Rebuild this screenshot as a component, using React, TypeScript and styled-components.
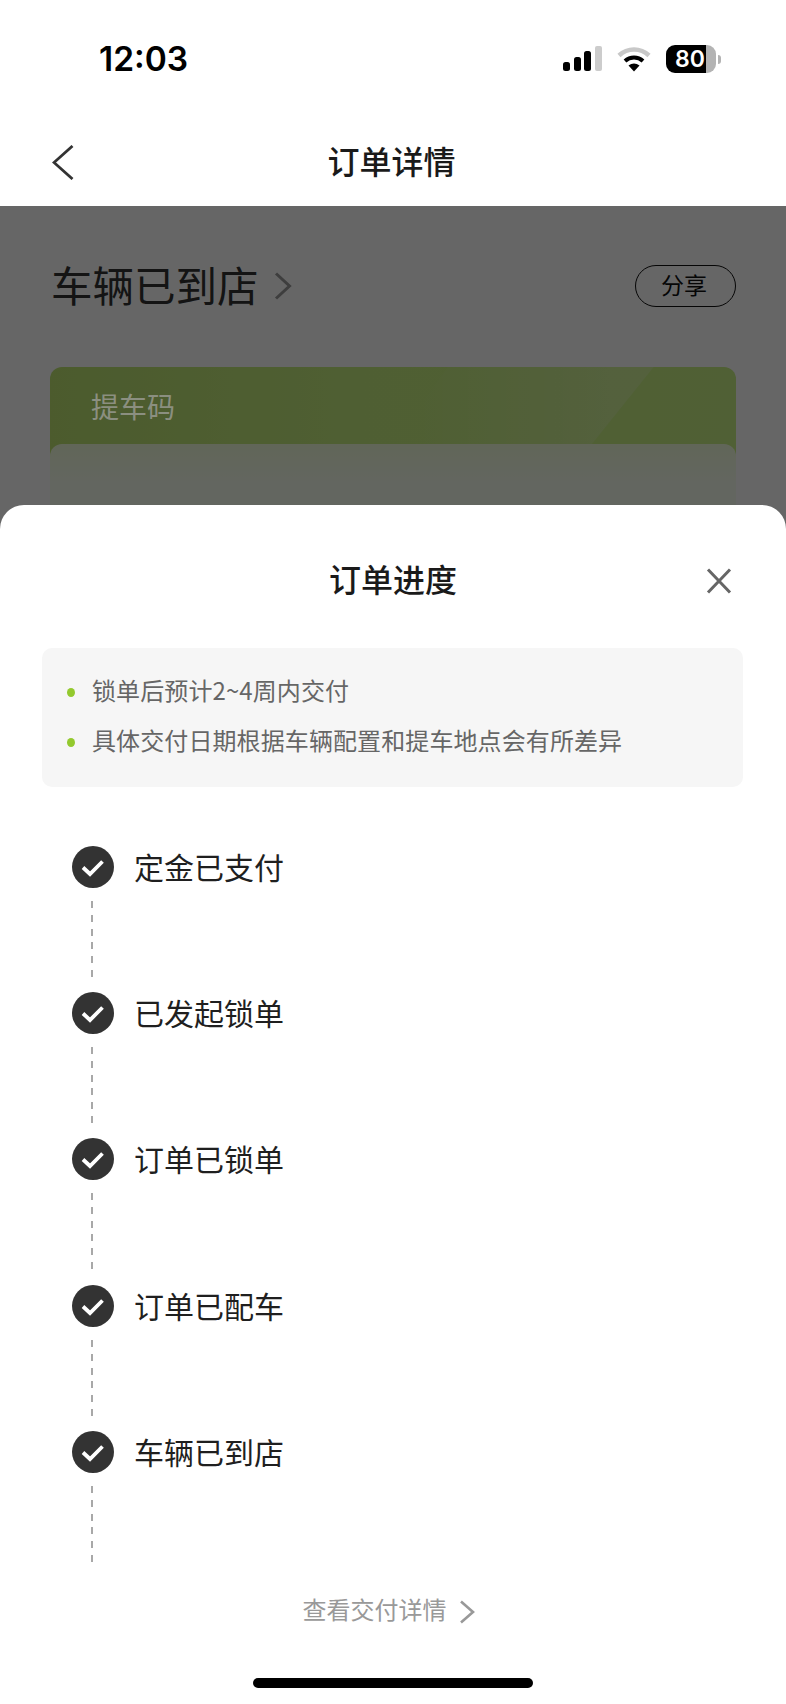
import React from 'react'
import styled, { createGlobalStyle } from 'styled-components'

const GlobalStyle = createGlobalStyle`
  html, body {
    margin: 0;
    padding: 0;
    background: #fff;
  }
  * {
    box-sizing: border-box;
  }
`

const tips = ['锁单后预计2~4周内交付', '具体交付日期根据车辆配置和提车地点会有所差异']
const steps = ['定金已支付', '已发起锁单', '订单已锁单', '订单已配车', '车辆已到店']

const StatusIcons = () => (
  <StatusRight>
    <svg width="39" height="26" viewBox="0 0 39 26">
      <rect x="0" y="16" width="7" height="9" rx="2.5" fill="#000" />
      <rect x="11" y="11" width="7" height="14" rx="2.5" fill="#000" />
      <rect x="21" y="5" width="7" height="20" rx="2.5" fill="#000" />
      <rect x="32" y="0" width="7" height="25" rx="2" fill="#ccc" />
    </svg>
    <svg width="34" height="26" viewBox="0 0 34 26">
      <path d="M2 9.5C10.5 1.5 23.5 1.5 32 9.5" fill="none" stroke="#c8c8c8" strokeWidth="4.5" />
      <path d="M8 15C13 10.4 21 10.4 26 15" fill="none" stroke="#000" strokeWidth="4" />
      <path d="M11.5 19.5L17 25.5L22.5 19.5C19 16.8 15 16.8 11.5 19.5Z" fill="#000" />
    </svg>
    <Battery>
      <BatteryBody>80</BatteryBody>
      <BatteryNub />
    </Battery>
  </StatusRight>
)

const Check = () => (
  <CheckCircle>
    <svg width="42" height="42" viewBox="0 0 42 42">
      <path d="M11 21.5L18 28L30.5 15.5" fill="none" stroke="#fff" strokeWidth="3.8" />
    </svg>
  </CheckCircle>
)

const App = () => {
  return (
    <Page>
      <GlobalStyle />
      <StatusBar>
        <Time>12:03</Time>
        <StatusIcons />
      </StatusBar>

      <NavBar>
        <BackIcon width="22" height="35" viewBox="0 0 22 35">
          <path d="M20.5 1L2 17.5L20.5 34" fill="none" stroke="#333" strokeWidth="2.8" />
        </BackIcon>
        <NavTitle>订单详情</NavTitle>
      </NavBar>

      <Body>
        <StatusRow>
          <StatusHeading>
            车辆已到店
            <svg width="18" height="28" viewBox="0 0 18 28">
              <path d="M2 1.5L15.5 14L2 26.5" fill="none" stroke="#9b9b9b" strokeWidth="3" />
            </svg>
          </StatusHeading>
          <ShareButton>分享</ShareButton>
        </StatusRow>

        <PickupCard>
          <PickupLabel>提车码</PickupLabel>
          <PickupInner />
        </PickupCard>

        <Scrim />

        <Sheet>
          <SheetHeader>
            <span />
            <SheetTitle>订单进度</SheetTitle>
            <CloseIcon width="26" height="26" viewBox="0 0 26 26">
              <path d="M2 1.5L24 24.5M24 1.5L2 24.5" fill="none" stroke="#666" strokeWidth="3" />
            </CloseIcon>
          </SheetHeader>

          <TipBox>
            {tips.map(tip => (
              <TipRow key={tip}>
                <TipDot />
                <TipText>{tip}</TipText>
              </TipRow>
            ))}
          </TipBox>

          <StepList>
            {steps.map(step => (
              <Step key={step}>
                <StepMarker>
                  <Check />
                  <DashLine />
                </StepMarker>
                <StepLabel>{step}</StepLabel>
              </Step>
            ))}
          </StepList>

          <DetailLink>
            <DetailText>查看交付详情</DetailText>
            <svg width="16" height="24" viewBox="0 0 16 24">
              <path d="M2 1.5L14 12L2 22.5" fill="none" stroke="#999" strokeWidth="2.6" />
            </svg>
          </DetailLink>

          <HomeBar />
        </Sheet>
      </Body>
    </Page>
  )
}

const Page = styled.div`
  width: 786px;
  height: 1704px;
  display: flex;
  flex-direction: column;
  overflow: hidden;
  background: #fff;
  font-family: "Noto Sans CJK SC", "Noto Sans", sans-serif;
  color: #1a1a1a;
`

const StatusBar = styled.div`
  height: 118px;
  padding: 38px 65px 0 99px;
  display: flex;
  justify-content: space-between;
  align-items: flex-start;
`

const Time = styled.div`
  font-family: Inter, "Liberation Sans", sans-serif;
  font-size: 33.5px;
  font-weight: 600;
  line-height: 42px;
  color: #000;
`

const StatusRight = styled.div`
  display: flex;
  align-items: center;
  gap: 15px;
  margin-top: 7px;
  height: 28px;
`

const Battery = styled.div`
  display: flex;
  align-items: center;
  gap: 2px;
`

const BatteryBody = styled.div`
  width: 50px;
  height: 28px;
  padding-left: 9px;
  border-radius: 9px;
  background: linear-gradient(90deg, #000 0 40px, #b3b3b3 40px);
  color: #fff;
  font-family: Inter, "Liberation Sans", sans-serif;
  font-size: 23px;
  font-weight: 600;
  line-height: 28px;
`

const BatteryNub = styled.div`
  width: 3px;
  height: 9px;
  border-radius: 0 3px 3px 0;
  background: #b3b3b3;
`

const NavBar = styled.div`
  height: 88px;
  padding: 0 55px 4px 52px;
  display: grid;
  grid-template-columns: 1fr auto 1fr;
  align-items: center;
`

const BackIcon = styled.svg`
  margin-top: 4px;
`

const NavTitle = styled.div`
  font-size: 32px;
  line-height: 44px;
  font-weight: 500;
  color: #1a1a1a;
`

const Body = styled.div`
  position: relative;
  flex: 1;
  overflow: hidden;
  background: #fff;
`

const StatusRow = styled.div`
  padding: 59px 50px 0 51px;
  display: flex;
  justify-content: space-between;
  align-items: center;
`

const StatusHeading = styled.div`
  display: flex;
  align-items: center;
  gap: 15px;
  font-size: 41.5px;
  line-height: 38px;
  padding-bottom: 4px;
  color: #333;

  svg {
    margin-top: 4px;
  }
`

const ShareButton = styled.div`
  width: 101px;
  height: 42px;
  padding-right: 3px;
  border: 1.5px solid #111;
  border-radius: 21px;
  text-align: center;
  font-size: 23px;
  line-height: 37px;
  color: #111;
`

const PickupCard = styled.div`
  position: relative;
  margin: 60px 50px 0 50px;
  height: 400px;
  padding-top: 20px;
  border-radius: 12px;
  background: linear-gradient(90deg, #bde472 0%, #c6ee80 45%, #c8f084 100%);

  /* light streak across the top right of the card */
  &::before {
    content: '';
    position: absolute;
    left: 0;
    top: 0;
    width: 100%;
    height: 77px;
    background: linear-gradient(90deg, rgba(255, 255, 255, 0) 54%, rgba(255, 255, 255, 0.18) 82%);
    clip-path: polygon(58% 0, 88% 0, 79% 100%, 50% 100%);
  }
`

const PickupLabel = styled.div`
  position: relative;
  z-index: 1;
  padding-left: 41px;
  font-size: 28px;
  line-height: 38px;
  height: 40px;
  color: #8b8f80;
`

const PickupInner = styled.div`
  position: relative;
  margin-top: 17px;
  height: 300px;
  border-radius: 12px;
  background: linear-gradient(180deg, #f2ffdc, #f8fff0 40px);
`

const Scrim = styled.div`
  position: absolute;
  inset: 0;
  background: rgba(0, 0, 0, 0.6);
`

const Sheet = styled.div`
  position: absolute;
  z-index: 2;
  left: 0;
  right: 0;
  bottom: 0;
  height: 1199px;
  display: flex;
  flex-direction: column;
  border-radius: 24px 24px 0 0;
  background: #fff;
`

const SheetHeader = styled.div`
  height: 143px;
  padding: 56px 54px 47px 0;
  display: grid;
  grid-template-columns: 1fr auto 1fr;
  align-items: center;
`

const SheetTitle = styled.div`
  margin-left: 54px;
  font-size: 32px;
  line-height: 34px;
  height: 40px;
  font-weight: 500;
  color: #1a1a1a;
`

const CloseIcon = styled.svg`
  justify-self: end;
`

const TipBox = styled.div`
  margin: 0 43px 0 42px;
  height: 139px;
  padding: 19px 25px 20px;
  border-radius: 10px;
  background: #f6f6f6;
`

const TipRow = styled.div`
  display: flex;
  align-items: center;
  gap: 17px;
  height: 50px;
  font-size: 24px;
  letter-spacing: 0.1px;
  color: #666;
`

const TipDot = styled.span`
  width: 8px;
  height: 9px;
  border-radius: 50%;
  background: #93c92e;
`

const TipText = styled.span`
  margin-top: -6px;
`

const StepList = styled.div`
  margin-top: 59px;
  padding-left: 72px;
`

const Step = styled.div`
  height: 146.2px;
  display: flex;
  align-items: flex-start;
  gap: 20px;
`

const StepMarker = styled.div`
  width: 42px;
  display: flex;
  flex-direction: column;
  align-items: center;
  gap: 13px;
`

const CheckCircle = styled.div`
  width: 42px;
  height: 42px;
  border-radius: 50%;
  background: #333;
`

const DashLine = styled.div`
  width: 2px;
  height: 78px;
  margin-left: -3px;
  background: repeating-linear-gradient(180deg, #a8a8a8 0 7px, transparent 7px 13.8px);
`

const StepLabel = styled.div`
  margin-top: -1px;
  font-size: 30px;
  line-height: 42px;
  color: #1f1f1f;
`

const DetailLink = styled.div`
  margin-top: 18px;
  padding-right: 9px;
  display: flex;
  justify-content: center;
  align-items: center;
  gap: 12px;
  height: 34px;
  font-size: 24px;
  color: #999;
`

const DetailText = styled.span`
  margin-top: -6px;
`

const HomeBar = styled.div`
  width: 280px;
  height: 10px;
  margin: 49px auto 0;
  border-radius: 5px;
  background: #000;
`

export default App
